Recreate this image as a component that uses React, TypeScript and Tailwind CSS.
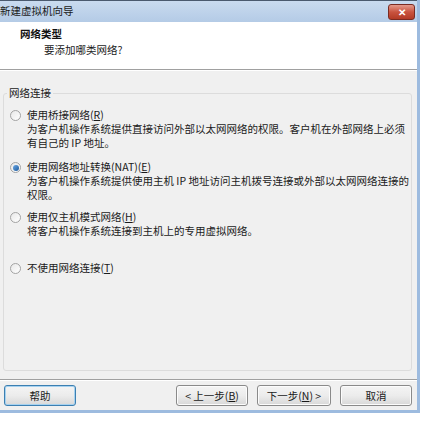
import type { ReactNode } from "react";

const font = { fontFamily: '"Noto Sans CJK SC", "Liberation Sans", sans-serif' };

function Radio({ checked }: { checked?: boolean }) {
  return (
    <span className="relative mt-[2px] flex h-[11px] w-[11px] shrink-0 items-center justify-center rounded-full border border-[#a3a3a3] bg-gradient-to-br from-[#e8e8e8] to-[#ffffff]">
      {checked ? (
        <span className="h-[6px] w-[6px] rounded-full bg-gradient-to-br from-[#6aa8e6] to-[#1c5a9c]" />
      ) : null}
    </span>
  );
}

function Option({
  checked,
  label,
  lines,
}: {
  checked?: boolean;
  label: ReactNode;
  lines: string[];
}) {
  return (
    <div className="flex items-start gap-[6px] pl-[6px]">
      <Radio checked={checked} />
      <div className="text-[10.5px] leading-[14px] text-[#1a1a1a]">
        <div>{label}</div>
        {lines.map((l) => (
          <div key={l}>{l}</div>
        ))}
      </div>
    </div>
  );
}

function Button({ children, primary }: { children: ReactNode; primary?: boolean }) {
  return (
    <button
      type="button"
      className={
        "flex h-[21px] w-full items-center justify-center rounded-[3px] border bg-gradient-to-b from-[#f4f4f4] via-[#ececec] to-[#d8d8d8] text-[10.5px] text-[#1a1a1a] " +
        (primary
          ? "border-[#3c7fb1] shadow-[inset_0_0_0_1px_#a6d2f0]"
          : "border-[#8a8a8a] shadow-[inset_0_0_0_1px_#fcfcfc]")
      }
    >
      {children}
    </button>
  );
}

export default function App() {
  return (
    <div className="h-[426px] w-[424px] overflow-hidden bg-white" style={font}>
      <div className="flex h-[413px] w-[420px] flex-col border-b-[3px] border-r-[3px] border-[#9dbbdf] bg-[#f0f0f0]">
        {/* title bar */}
        <div className="flex h-[22px] shrink-0 items-center justify-between border-t border-[#4a5a6e] bg-gradient-to-b from-[#c9dbef] to-[#b4cbe6] pr-[2px]">
          <span className="text-[10.5px] leading-none text-[#1a1a1a]">新建虚拟机向导</span>
          <span className="flex h-[16px] w-[27px] items-center justify-center rounded-[3px] border border-[#7a2b22] bg-gradient-to-b from-[#e49a8c] via-[#c9533f] to-[#b33a25] text-[10px] font-bold leading-none text-white">
            ✕
          </span>
        </div>

        {/* header */}
        <div className="h-[47px] shrink-0 bg-white pl-[20px] pt-[4px]">
          <div className="text-[10.5px] font-bold leading-[15px] text-[#111]">网络类型</div>
          <div className="pl-[24px] text-[10.5px] leading-[17px] text-[#1a1a1a]">要添加哪类网络?</div>
        </div>
        <div className="h-px shrink-0 bg-[#a0a0a0]" />
        <div className="h-px shrink-0 bg-white" />

        {/* body */}
        <div className="flex-1 px-[3px] pt-[22px]">
          <div className="relative h-[278px] w-[409px] rounded-[3px] border border-[#dcdcdc] pt-[14px]">
            <span className="absolute -top-[8px] left-[3px] bg-[#f0f0f0] px-[2px] text-[10.5px] leading-[14px] text-[#1a1a1a]">
              网络连接
            </span>
            <div className="flex flex-col">
              <Option
                label={
                  <>
                    使用桥接网络(<u>R</u>)
                  </>
                }
                lines={[
                  "为客户机操作系统提供直接访问外部以太网网络的权限。客户机在外部网络上必须",
                  "有自己的 IP 地址。",
                ]}
              />
              <div className="h-[10px]" />
              <Option
                checked
                label={
                  <>
                    使用网络地址转换(NAT)(<u>E</u>)
                  </>
                }
                lines={[
                  "为客户机操作系统提供使用主机 IP 地址访问主机拨号连接或外部以太网网络连接的",
                  "权限。",
                ]}
              />
              <div className="h-[8px]" />
              <Option
                label={
                  <>
                    使用仅主机模式网络(<u>H</u>)
                  </>
                }
                lines={["将客户机操作系统连接到主机上的专用虚拟网络。"]}
              />
              <div className="h-[23px]" />
              <Option
                label={
                  <>
                    不使用网络连接(<u>T</u>)
                  </>
                }
                lines={[]}
              />
            </div>
          </div>
        </div>

        {/* footer */}
        <div className="h-px shrink-0 bg-[#a0a0a0]" />
        <div className="h-px shrink-0 bg-white" />
        <div className="flex h-[29px] shrink-0 items-start pt-[4px]">
          <div className="ml-[4px] w-[72px]">
            <Button primary>帮助</Button>
          </div>
          <div className="ml-auto mr-[5px] flex gap-[9px]">
            <div className="w-[72px]">
              <Button>
                &lt; 上一步(<u>B</u>)
              </Button>
            </div>
            <div className="w-[74px]">
              <Button>
                下一步(<u>N</u>) &gt;
              </Button>
            </div>
            <div className="w-[72px]">
              <Button>取消</Button>
            </div>
          </div>
        </div>
      </div>
    </div>
  );
}
